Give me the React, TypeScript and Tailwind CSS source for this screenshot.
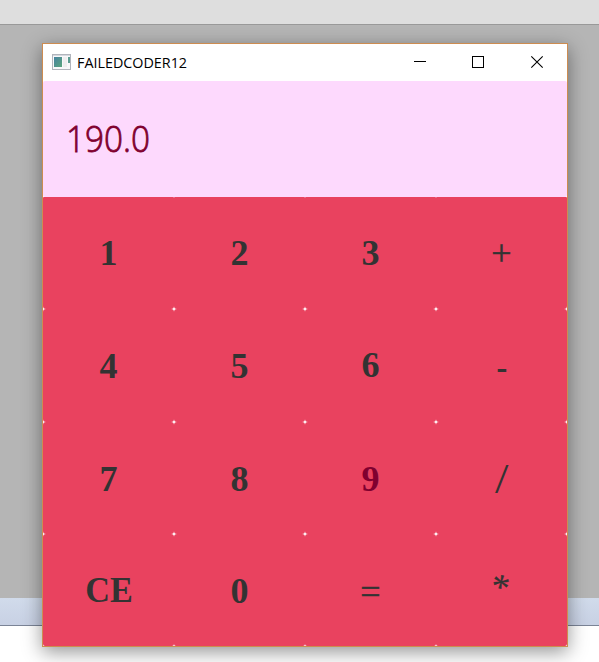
type Key = { label: string; className?: string };

const serif = "font-['Liberation_Serif',serif]";

const keys: Key[] = [
  { label: "1" },
  { label: "2" },
  { label: "3" },
  { label: "+", className: "font-normal text-[34px] [-webkit-text-stroke:0.5px_#333]" },
  { label: "4", className: "translate-y-px" },
  { label: "5", className: "translate-y-px" },
  { label: "6" },
  { label: "-", className: "translate-y-[2px] scale-x-90" },
  { label: "7", className: "translate-y-px" },
  { label: "8", className: "translate-y-px" },
  { label: "9", className: "text-[#80002f] translate-y-px" },
  { label: "/", className: "font-normal text-[42px] scale-x-[1.15] translate-y-px" },
  { label: "CE", className: "translate-x-px scale-x-[0.95]" },
  { label: "0", className: "translate-y-px" },
  { label: "=", className: "font-normal text-[34px] translate-y-[2px] [-webkit-text-stroke:0.5px_#333]" },
  { label: "*", className: "font-normal text-[28px] rotate-12 -translate-x-[2px] -translate-y-[3px] [-webkit-text-stroke:0.3px_#333]" },
];

function AppIcon() {
  return (
    <svg className="-translate-y-px" width="19" height="16" viewBox="0 0 19 16" shapeRendering="crispEdges">
      <defs>
        <linearGradient id="pane" x1="0" y1="0" x2="1" y2="1">
          <stop offset="0" stopColor="#4682a0" />
          <stop offset="1" stopColor="#5aa57d" />
        </linearGradient>
      </defs>
      <rect x="0.5" y="0.5" width="18" height="15" fill="#f8f8fa" stroke="#b1b5bc" />
      <rect x="1" y="1" width="17" height="1" fill="#d5d8de" />
      <rect x="2" y="3" width="8" height="10" fill="url(#pane)" />
      <rect x="11" y="3" width="4" height="10" fill="#eeeeef" />
      <rect x="16" y="3" width="1.5" height="6" fill="#5b9c91" />
    </svg>
  );
}

function TitleBar() {
  return (
    <header className="flex h-[37px] shrink-0 items-center bg-white pl-[9px]">
      <AppIcon />
      <span className="ml-[6px] w-[220px] origin-left -translate-y-px scale-x-[0.955] whitespace-nowrap font-['Open_Sans',sans-serif] text-[15px] leading-5 text-black">
        FAILEDCODER12
      </span>
      <svg className="ml-auto" width="175" height="37" viewBox="0 0 175 37" fill="none" stroke="#000">
        <path d="M22 17.5h12M80.5 12.5h11v11h-11z" shapeRendering="crispEdges" />
        <path d="M139.3 12.3l11.4 11.4M150.7 12.3l-11.4 11.4" strokeWidth="1.1" />
      </svg>
    </header>
  );
}

export default function App() {
  return (
    <div className="relative flex h-[662px] w-[599px] flex-col overflow-hidden bg-white">
      <div className="h-[25px] border-b border-[#999999] bg-[#dedede]" />
      <div className="h-[573px] bg-[#b5b5b5]" />
      <div className="h-[28px] border-b border-[#7b8496] bg-linear-to-b from-[#d1dbeb] to-[#c8d1e4]" />

      <main className="absolute top-[43px] left-[42px] flex h-[604px] w-[526px] flex-col border border-[#cd8c50] bg-white shadow-[0_5px_18px_rgba(0,0,0,0.42)]">
        <TitleBar />
        <div className="flex h-[116px] shrink-0 items-center rounded-[2px] bg-[#fdd9fd] pl-[23px]">
          <span className="origin-left scale-x-[0.925] font-['Open_Sans',sans-serif] text-[36px] leading-[48px] font-light text-[#80002f] [-webkit-text-stroke:0.8px_#80002f]">
            190.0
          </span>
        </div>
        <div className="grid min-h-0 flex-1 grid-cols-4 grid-rows-4 bg-[linear-gradient(#fdd9fd_3px,white_3px)]">
          {keys.map(({ label, className = "" }, index) => (
            <button
              key={label}
              className={`flex items-center justify-center bg-[#e9425f] text-[#333333] ${
                index < 4 ? "rounded-t-[1px] rounded-b-[3px]" : index > 11 ? "rounded-t-[3px] rounded-b-[2px]" : "rounded-[3px]"
              }`}
            >
              <span className={`${serif} text-[36px] leading-10 font-bold ${className}`}>{label}</span>
            </button>
          ))}
        </div>
      </main>
    </div>
  );
}
